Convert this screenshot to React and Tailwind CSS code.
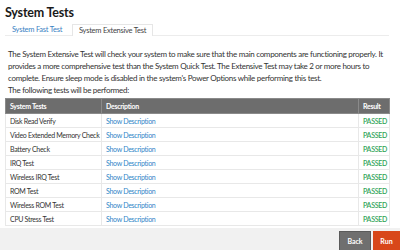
import React from "react";

const tests = [
  "Disk Read Verify",
  "Video Extended Memory Check",
  "Battery Check",
  "IRQ Test",
  "Wireless IRQ Test",
  "ROM Test",
  "Wireless ROM Test",
  "CPU Stress Test",
];

export default function App() {
  return (
    <div className="w-[400px] h-[250px] overflow-hidden bg-white flex flex-col font-['Lato','Liberation_Sans',sans-serif]">
      {/* Title */}
      <h1 className="pl-[5px] pt-[4px] text-[12.5px] leading-[17px] font-bold text-[#1a1a1a] tracking-[-0.2px]">System Tests</h1>

      {/* Tabs */}
      <div className="mt-[3px] ml-[5px] w-[384px] h-[19px] flex border-b border-[#ececec] whitespace-nowrap text-[7.5px] tracking-[-0.25px]">
        <div className="w-[67px] pl-[7px] flex items-center text-[#3a7fc3]">System Fast Test</div>
        <div className="w-[81px] pl-[6px] flex items-center text-[#444] bg-white border-x border-t border-[#e6e6e6] -mb-px">
          System Extensive Test
        </div>
      </div>

      {/* Intro */}
      <p className="mt-[12px] pl-[8px] text-[8px] leading-[12px] text-[#333] whitespace-nowrap tracking-[-0.3px]">
        The System Extensive Test will check your system to make sure that the main components are functioning properly. It
        <br />
        provides a more comprehensive test than the System Quick Test. The Extensive Test may take 2 or more hours to
        <br />
        complete. Ensure sleep mode is disabled in the system's Power Options while performing this test.
        <br />
        The following tests will be performed:
      </p>

      {/* Table */}
      <table className="mt-[2px] ml-[5px] w-[384px] border-collapse table-fixed text-[7px] tracking-[-0.3px]">
        <thead>
          <tr className="h-[15px] bg-[#6d6d6d] text-white font-bold text-left">
            <th className="w-[96px] pl-[4px] border border-[#8a8a8a]">System Tests</th>
            <th className="w-[257px] pl-[4px] border border-[#8a8a8a]">Description</th>
            <th className="w-[31px] pl-[4px] border border-[#8a8a8a]">Result</th>
          </tr>
        </thead>
        <tbody>
          {tests.map((t) => (
            <tr key={t} className="h-[14px]">
              <td className="pl-[4px] border border-[#e8e8e8] text-[#333] whitespace-nowrap">{t}</td>
              <td className="pl-[4px] border border-[#e8e8e8] text-[#2f86c8]">Show Description</td>
              <td className="pl-[4px] border border-[#e8e8e8] text-[#2fa357] font-semibold">PASSED</td>
            </tr>
          ))}
        </tbody>
      </table>

      {/* Footer */}
      <div className="mt-[2px] flex-1 bg-[#f1f1f1] flex justify-end items-start pt-[3px] gap-[2px]">
        <button className="w-[32px] h-[20px] bg-[#6f6f6f] border border-[#5a5a5a] text-white text-[7px] font-bold">Back</button>
        <button className="w-[27px] h-[20px] bg-[#d8471a] text-white text-[7px] font-bold">Run</button>
      </div>
    </div>
  );
}
